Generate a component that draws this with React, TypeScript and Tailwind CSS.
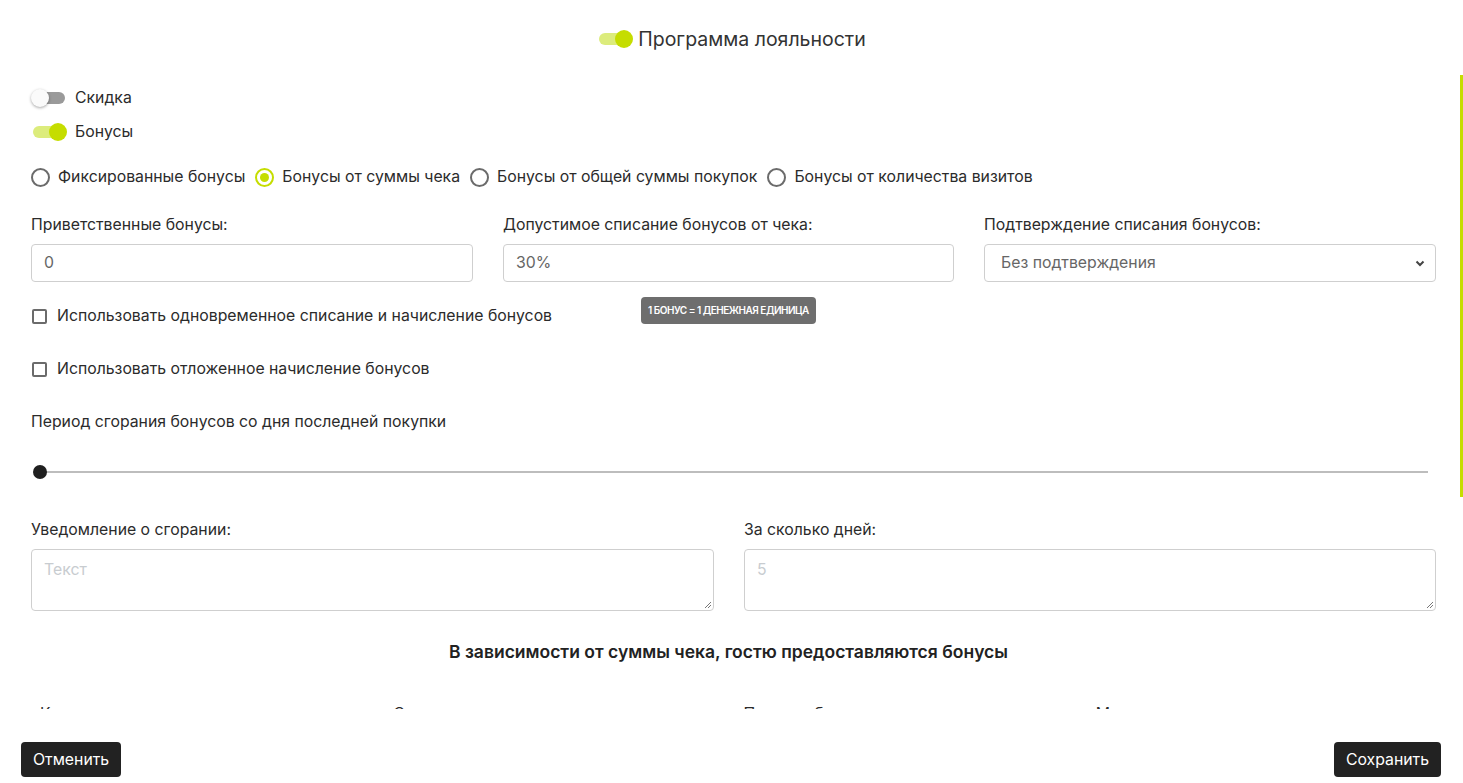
import React from "react";

function Toggle({ on }: { on: boolean }) {
  return (
    <div className="relative w-[36px] h-[18px] flex items-center shrink-0">
      <div className={`ml-[2px] w-[32px] h-[12px] rounded-full ${on ? "bg-[#dcec7c]" : "bg-[#9a9a9a]"}`} />
      <div
        className={`absolute top-0 w-[18px] h-[18px] rounded-full ${
          on ? "right-0 bg-[#c5dd00]" : "left-0 bg-[#fafafa] shadow-[0_1px_3px_rgba(0,0,0,0.35)]"
        }`}
      />
    </div>
  );
}

function Radio({ checked, label }: { checked?: boolean; label: string }) {
  return (
    <div className="flex items-center gap-[8px]">
      <div
        className={`w-[19px] h-[19px] rounded-full border-[2px] flex items-center justify-center ${
          checked ? "border-[#c5dd00]" : "border-[#6b6b6b]"
        }`}
      >
        {checked && <div className="w-[9px] h-[9px] rounded-full bg-[#c5dd00]" />}
      </div>
      <span>{label}</span>
    </div>
  );
}

function Checkbox({ label }: { label: string }) {
  return (
    <div className="flex items-center gap-[10px]">
      <div className="w-[15px] h-[15px] border-[2px] border-[#6b6b6b] rounded-[2px] ml-[1px]" />
      <span>{label}</span>
    </div>
  );
}

export default function App() {
  return (
    <div
      className="w-[1463px] h-[783px] bg-white flex flex-col text-[15.8px] text-[#2b2b2b] overflow-hidden relative"
      style={{ fontFamily: "Inter, 'Noto Sans', sans-serif" }}
    >
      {/* header */}
      <div className="h-[70px] flex items-start justify-center pt-[28px] shrink-0">
        <div className="flex items-center gap-[5px]">
          <Toggle on />
          <span className="text-[19.5px] text-[#333] leading-[22px]">Программа лояльности</span>
        </div>
      </div>

      {/* scroll area */}
      <div className="h-[639px] overflow-hidden shrink-0 pl-[31px] pr-[27px] relative">
        <div className="flex flex-col">
          <div className="mt-[19px] flex items-center gap-[8px] h-[18px]">
            <Toggle on={false} />
            <span>Скидка</span>
          </div>
          <div className="mt-[16px] flex items-center gap-[8px] h-[18px]">
            <Toggle on />
            <span>Бонусы</span>
          </div>

          <div className="mt-[26px] flex items-center gap-[10px] h-[20px]">
            <Radio label="Фиксированные бонусы" />
            <Radio checked label="Бонусы от суммы чека" />
            <Radio label="Бонусы от общей суммы покупок" />
            <Radio label="Бонусы от количества визитов" />
          </div>

          <div className="mt-[28px] grid grid-cols-[442px_451px_452px] gap-x-[30px] relative">
            <div className="flex flex-col">
              <label className="h-[20px] leading-[20px]">Приветственные бонусы:</label>
              <div className="mt-[9px] h-[38px] border border-[#cfcfcf] rounded-[4px] flex items-center px-[12px] text-[#666]">
                0
              </div>
            </div>
            <div className="flex flex-col relative">
              <label className="h-[20px] leading-[20px]">Допустимое списание бонусов от чека:</label>
              <div className="mt-[9px] h-[38px] border border-[#cfcfcf] rounded-[4px] flex items-center px-[12px] text-[#666]">
                30%
              </div>
              <div className="absolute top-[82px] left-[138px] w-[175px] h-[27px] rounded-[4px] bg-[#6e6e6e] text-white text-[10px] font-semibold tracking-[-0.5px] flex items-center justify-center whitespace-nowrap">
                1 БОНУС = 1 ДЕНЕЖНАЯ ЕДИНИЦА
              </div>
            </div>
            <div className="flex flex-col">
              <label className="h-[20px] leading-[20px]">Подтверждение списания бонусов:</label>
              <div className="mt-[9px] h-[38px] border border-[#cfcfcf] rounded-[4px] flex items-center justify-between pl-[16px] pr-[10px] text-[#666]">
                <span>Без подтверждения</span>
                <svg width="10" height="7" viewBox="0 0 10 7">
                  <path d="M1.5 1.5 L5 5 L8.5 1.5" fill="none" stroke="#444" strokeWidth="2" />
                </svg>
              </div>
            </div>
          </div>

          <div className="mt-[24px] h-[20px] flex items-center">
            <Checkbox label="Использовать одновременное списание и начисление бонусов" />
          </div>
          <div className="mt-[33px] h-[20px] flex items-center">
            <Checkbox label="Использовать отложенное начисление бонусов" />
          </div>

          <div className="mt-[33px] h-[20px] leading-[20px]">Период сгорания бонусов со дня последней покупки</div>

          <div className="mt-[33px] h-[14px] relative mr-[8px]">
            <div className="absolute left-[8px] right-0 top-[6px] h-[2px] bg-[#bdbdbd]" />
            <div className="absolute left-[2px] top-0 w-[14px] h-[14px] rounded-full bg-[#1f1f1f]" />
          </div>

          <div className="mt-[41px] grid grid-cols-[683px_692px] gap-x-[30px]">
            <div className="flex flex-col">
              <label className="h-[20px] leading-[20px]">Уведомление о сгорании:</label>
              <div className="mt-[9px] h-[62px] border border-[#cfcfcf] rounded-[4px] px-[12px] pt-[8px] text-[#c8ccd0] relative">
                Текст
                <svg className="absolute right-[1px] bottom-[1px]" width="9" height="9" viewBox="0 0 9 9">
                  <path d="M8 2 L2 8 M8 5 L5 8" stroke="#777" strokeWidth="1" />
                </svg>
              </div>
            </div>
            <div className="flex flex-col">
              <label className="h-[20px] leading-[20px]">За сколько дней:</label>
              <div className="mt-[9px] h-[62px] border border-[#cfcfcf] rounded-[4px] px-[12px] pt-[8px] text-[#c8ccd0] relative">
                5
                <svg className="absolute right-[1px] bottom-[1px]" width="9" height="9" viewBox="0 0 9 9">
                  <path d="M8 2 L2 8 M8 5 L5 8" stroke="#777" strokeWidth="1" />
                </svg>
              </div>
            </div>
          </div>

          <div className="mt-[29px] pr-[10px] text-center text-[17.5px] font-semibold text-[#222] h-[24px] leading-[24px]">
            В зависимости от суммы чека, гостю предоставляются бонусы
          </div>

          <div className="mt-[40px] grid grid-cols-4 h-[20px] leading-[20px]">
            <div className="pl-[9px]">Количество</div>
            <div className="pl-[11px]">Сумма чека</div>
            <div className="pl-[10px]">Процент бонусов</div>
            <div className="pl-[11px]">Максимум</div>
          </div>
        </div>
      </div>

      {/* scrollbar thumb */}
      <div className="absolute right-0 top-[75px] w-[3px] h-[422px] bg-[#c5dd00]" />

      {/* footer */}
      <div className="flex-1 flex justify-between items-start pl-[21px] pr-[22px] pt-[33px]">
        <button className="h-[35px] px-[12px] bg-[#222] text-white rounded-[4px] text-[15.8px]">Отменить</button>
        <button className="h-[35px] px-[12px] bg-[#222] text-white rounded-[4px] text-[15.8px]">Сохранить</button>
      </div>
    </div>
  );
}
